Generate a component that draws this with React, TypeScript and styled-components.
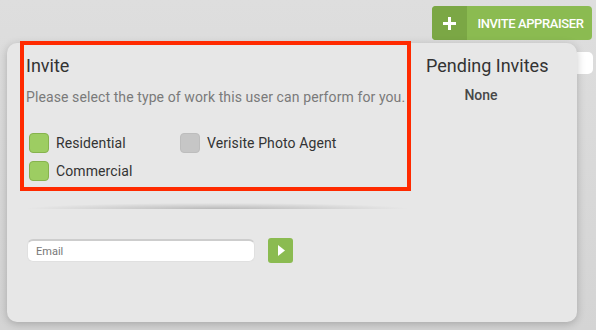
import React from "react";
import styled, { createGlobalStyle } from "styled-components";

const GlobalStyle = createGlobalStyle`
  body {
    margin: 0;
    background: #d9d9d9;
    font-family: Roboto, "Liberation Sans", sans-serif;
  }
`;

const Page = styled.div`
  width: 596px;
  height: 330px;
  overflow: hidden;
  background: linear-gradient(#dedede, #d4d4d4);
`;

const TopBar = styled.div`
  display: flex;
  justify-content: flex-end;
  height: 43px;
  padding: 6px 4px 0 0;
  box-sizing: border-box;
`;

const InviteButton = styled.button`
  display: flex;
  align-items: stretch;
  height: 34px;
  width: 160px;
  padding: 0;
  border: none;
  border-radius: 4px;
  overflow: hidden;
  background: #8bbb51;
  color: #fff;
  font-family: Roboto, "Liberation Sans", sans-serif;
  font-size: 13px;
  font-weight: 500;
  letter-spacing: -0.4px;
  cursor: pointer;
`;

const PlusSection = styled.span`
  display: flex;
  align-items: center;
  justify-content: center;
  width: 35px;
  background: #7ba745;
`;

const ButtonLabel = styled.span`
  flex: 1;
  display: flex;
  align-items: center;
  justify-content: center;
  padding-left: 2px;
`;

const Main = styled.div`
  display: flex;
  align-items: flex-start;
  padding-left: 7px;
`;

const Card = styled.div`
  position: relative;
  z-index: 1;
  display: flex;
  width: 570px;
  height: 279px;
  padding-left: 13px;
  box-sizing: border-box;
  background: #e7e7e7;
  border-radius: 10px;
  box-shadow: 0 2px 9px rgba(0, 0, 0, 0.22);
`;

const BehindField = styled.div`
  width: 16px;
  height: 22px;
  margin-top: 9px;
  background: #fff;
  border-radius: 0 5px 5px 0;
`;

const LeftColumn = styled.div`
  display: flex;
  flex-direction: column;
  width: 391px;
`;

const Highlight = styled.section`
  margin-top: -2px;
  height: 150px;
  padding: 10px 0 0 2px;
  box-sizing: border-box;
  border: 4px solid #ff2a00;
`;

const Heading = styled.h2`
  margin: 0;
  font-size: 18px;
  line-height: 22px;
  font-weight: 400;
  color: #333;
  white-space: nowrap;
`;

const Subtitle = styled.p`
  margin: 10px 0 0;
  font-size: 14px;
  line-height: 20px;
  letter-spacing: 0.1px;
  color: #7a7a7a;
  white-space: nowrap;
`;

const OptionGrid = styled.div`
  display: grid;
  grid-template-columns: 151px auto;
  row-gap: 8px;
  margin: 26px 0 0 3px;
`;

const Option = styled.label`
  display: flex;
  align-items: center;
  gap: 7px;
  height: 20px;
  font-size: 14px;
  letter-spacing: 0.1px;
  color: #333;
`;

const Box = styled.span<{ $checked: boolean }>`
  width: 20px;
  height: 20px;
  box-sizing: border-box;
  border-radius: 4px;
  background: ${(p) => (p.$checked ? "#9dcd62" : "#c6c6c6")};
  border: 1px solid ${(p) => (p.$checked ? "#86b34d" : "#bdbdbd")};
`;

const Separator = styled.div`
  width: 380px;
  height: 6px;
  margin: 12px 0 0 7px;
  background: radial-gradient(ellipse at 50% 100%, rgba(0, 0, 0, 0.2), rgba(0, 0, 0, 0) 72%);
`;

const EmailRow = styled.div`
  display: flex;
  align-items: center;
  gap: 13px;
  margin: 29px 0 0 7px;
`;

const EmailInput = styled.input`
  width: 228px;
  height: 23px;
  box-sizing: border-box;
  padding: 0 8px;
  border: 1px solid #e0e0e0;
  border-top: 2px solid #cdcdcd;
  border-radius: 6px;
  background: #fff;
  font-family: Roboto, "Liberation Sans", sans-serif;
  font-size: 11px;
  outline: none;

  &::placeholder {
    color: #777;
  }
`;

const GoButton = styled.button`
  display: flex;
  align-items: center;
  justify-content: center;
  width: 25px;
  height: 25px;
  padding: 0 0 0 1px;
  border: none;
  border-radius: 3px;
  background: #8bbb51;
  cursor: pointer;
`;

const RightColumn = styled.div`
  display: flex;
  flex-direction: column;
  width: 110px;
  padding: 12px 0 0 15px;
`;

const None = styled.div`
  margin-top: 8px;
  text-align: center;
  font-size: 14px;
  line-height: 20px;
  font-weight: 500;
  color: #484848;
`;

const options = [
  { label: "Residential", checked: true },
  { label: "Verisite Photo Agent", checked: false },
  { label: "Commercial", checked: true },
];

export default function App() {
  return (
    <Page>
      <GlobalStyle />
      <TopBar>
        <InviteButton>
          <PlusSection>
            <svg width="13" height="13" viewBox="0 0 13 13">
              <path d="M6.5 0v13M0 6.5h13" stroke="#fff" strokeWidth="3" />
            </svg>
          </PlusSection>
          <ButtonLabel>INVITE APPRAISER</ButtonLabel>
        </InviteButton>
      </TopBar>
      <Main>
        <Card>
          <LeftColumn>
            <Highlight>
              <Heading>Invite</Heading>
              <Subtitle>Please select the type of work this user can perform for you.</Subtitle>
              <OptionGrid>
                {options.map((o) => (
                  <Option key={o.label}>
                    <Box $checked={o.checked} />
                    {o.label}
                  </Option>
                ))}
              </OptionGrid>
            </Highlight>
            <Separator />
            <EmailRow>
              <EmailInput placeholder="Email" />
              <GoButton>
                <svg width="7" height="11" viewBox="0 0 7 11">
                  <polygon points="0,0 7,5.5 0,11" fill="#fff" />
                </svg>
              </GoButton>
            </EmailRow>
          </LeftColumn>
          <RightColumn>
            <Heading>Pending Invites</Heading>
            <None>None</None>
          </RightColumn>
        </Card>
        <BehindField />
      </Main>
    </Page>
  );
}
